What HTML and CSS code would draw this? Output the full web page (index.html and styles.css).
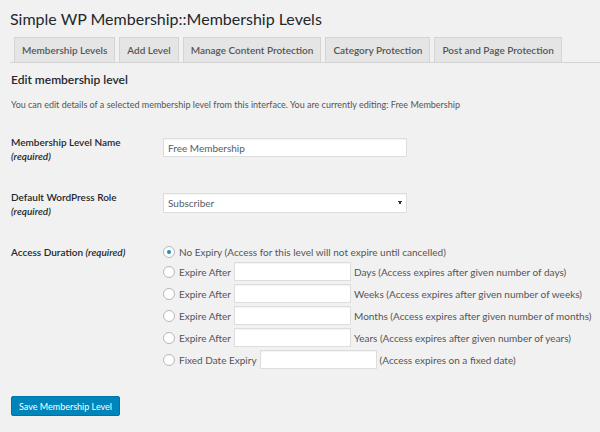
FILE: index.html
```html
<!DOCTYPE html>
<html lang="en">
<head>
    <meta charset="UTF-8">
    <meta name="viewport" content="width=device-width, initial-scale=1.0">
    <title>Simple WP Membership::Membership Levels</title>
    <link rel="stylesheet" href="styles.css">
</head>
<body>
    <div class="wrap">
        <h1 class="page-title">Simple WP Membership::Membership Levels</h1>
        <nav class="nav-tabs">
            <a class="nav-tab" href="#levels">Membership Levels</a>
            <a class="nav-tab" href="#add">Add Level</a>
            <a class="nav-tab" href="#manage">Manage Content Protection</a>
            <a class="nav-tab" href="#category">Category Protection</a>
            <a class="nav-tab" href="#post">Post and Page Protection</a>
        </nav>

        <form class="level-form">
            <h2 class="form-title">Edit membership level</h2>
            <p class="form-intro">You can edit details of a selected membership level from this interface. You are currently editing: Free Membership</p>

            <div class="form-row">
                <label class="row-label" for="alias">Membership Level Name <span class="description">(required)</span></label>
                <input class="regular-text" type="text" id="alias" name="alias" value="Free Membership">
            </div>

            <div class="form-row">
                <label class="row-label" for="role">Default WordPress Role <span class="description">(required)</span></label>
                <select class="regular-text role-select" id="role" name="role">
                    <option selected>Subscriber</option>
                    <option>Contributor</option>
                    <option>Author</option>
                    <option>Editor</option>
                    <option>Administrator</option>
                </select>
            </div>

            <div class="form-row" role="radiogroup" aria-labelledby="duration-label">
                <div class="row-label" id="duration-label">Access Duration <span class="description">(required)</span></div>
                <div class="durations">
                    <div class="duration">
                        <input class="radio" type="radio" id="never" name="duration_type" checked>
                        <label for="never">No Expiry (Access for this level will not expire until cancelled)</label>
                    </div>
                    <div class="duration">
                        <input class="radio" type="radio" id="days" name="duration_type">
                        <label for="days">Expire After</label>
                        <input class="small-text" type="text" id="period_days" name="period_days">
                        <label for="period_days">Days (Access expires after given number of days)</label>
                    </div>
                    <div class="duration">
                        <input class="radio" type="radio" id="weeks" name="duration_type">
                        <label for="weeks">Expire After</label>
                        <input class="small-text" type="text" id="period_weeks" name="period_weeks">
                        <label for="period_weeks">Weeks (Access expires after given number of weeks)</label>
                    </div>
                    <div class="duration">
                        <input class="radio" type="radio" id="months" name="duration_type">
                        <label for="months">Expire After</label>
                        <input class="small-text" type="text" id="period_months" name="period_months">
                        <label for="period_months">Months (Access expires after given number of months)</label>
                    </div>
                    <div class="duration">
                        <input class="radio" type="radio" id="years" name="duration_type">
                        <label for="years">Expire After</label>
                        <input class="small-text" type="text" id="period_years" name="period_years">
                        <label for="period_years">Years (Access expires after given number of years)</label>
                    </div>
                    <div class="duration">
                        <input class="radio" type="radio" id="fixed" name="duration_type">
                        <label for="fixed">Fixed Date Expiry</label>
                        <input class="small-text" type="text" id="period_date" name="period_date">
                        <label for="period_date">(Access expires on a fixed date)</label>
                    </div>
                </div>
            </div>

            <button class="button-primary" type="submit">Save Membership Level</button>
        </form>
    </div>
</body>
</html>
```
FILE: styles.css
```css
* {
    box-sizing: border-box;
}
body {
    margin: 0;
    background-color: #f1f1f1;
    color: #555;
    font-family: Lato, "Open Sans", sans-serif;
    font-size: 10px;
    line-height: 14px;
}
.wrap {
    padding: 8px 0 16px 10px;
}
.page-title {
    margin: 0;
    color: #23282d;
    font-size: 16px;
    font-weight: 400;
    line-height: 22px;
}

/* Tabs */
.nav-tabs {
    display: flex;
    gap: 4px;
    margin-top: 7px;
    padding-left: 4px;
    border-bottom: 1px solid #d4d4d4;
}
.nav-tab {
    padding: 4px 7px;
    border: 1px solid #d4d4d4;
    border-bottom: 0;
    background-color: #e5e5e5;
    color: #555;
    font-weight: 600;
    line-height: 16px;
    text-decoration: none;
    white-space: nowrap;
}
.nav-tab:hover {
    background-color: #fff;
}

/* Form */
.level-form {
    padding-left: 1px;
}
.form-title {
    margin: 9px 0 0;
    color: #23282d;
    font-size: 12px;
    font-weight: 600;
    line-height: 16px;
}
.form-intro {
    margin: 10px 0 23px;
    font-size: 9px;
}
.form-row {
    display: grid;
    grid-template-columns: 128px 1fr;
    column-gap: 24px;
    align-items: start;
    margin-bottom: 27px;
}
.row-label {
    color: #23282d;
    font-weight: 600;
}
.description {
    font-style: italic;
    line-height: 1;
}
.regular-text,
.small-text {
    height: 19px;
    margin: 0;
    padding: 0 4px;
    border: 1px solid #ddd;
    border-radius: 0;
    background-color: #fff;
    box-shadow: inset 0 1px 1px rgba(0, 0, 0, 0.05);
    color: #555d66;
    font-family: inherit;
    font-size: 10px;
}
.regular-text {
    width: 244px;
    margin-top: 3px;
}
.small-text {
    width: 117px;
}
.role-select {
    height: 20px;
    appearance: none;
    background-image: linear-gradient(to bottom left, #32373c 50%, transparent 50%), linear-gradient(to bottom right, #32373c 50%, transparent 50%);
    background-position: right 6px center, right 4px center;
    background-repeat: no-repeat;
    background-size: 2px 4px;
}
.durations {
    display: grid;
    gap: 3px;
}
.duration {
    display: flex;
    align-items: center;
    gap: 3px;
    white-space: nowrap;
}
.radio {
    display: grid;
    place-content: center;
    flex: none;
    appearance: none;
    width: 12px;
    height: 12px;
    margin: 0 1px 0 0;
    border: 1px solid #b4b9be;
    border-radius: 50%;
    background-color: #fff;
}
.radio:checked::before {
    content: "";
    width: 4px;
    height: 4px;
    border-radius: 50%;
    background-color: #1e8cbe;
}
.button-primary {
    height: 20px;
    padding: 0 7px;
    border: 1px solid #0073aa;
    border-radius: 2px;
    background-color: #0085ba;
    color: #fff;
    font-family: inherit;
    font-size: 9px;
    cursor: pointer;
}
.button-primary:hover {
    background-color: #008ec2;
}
```
